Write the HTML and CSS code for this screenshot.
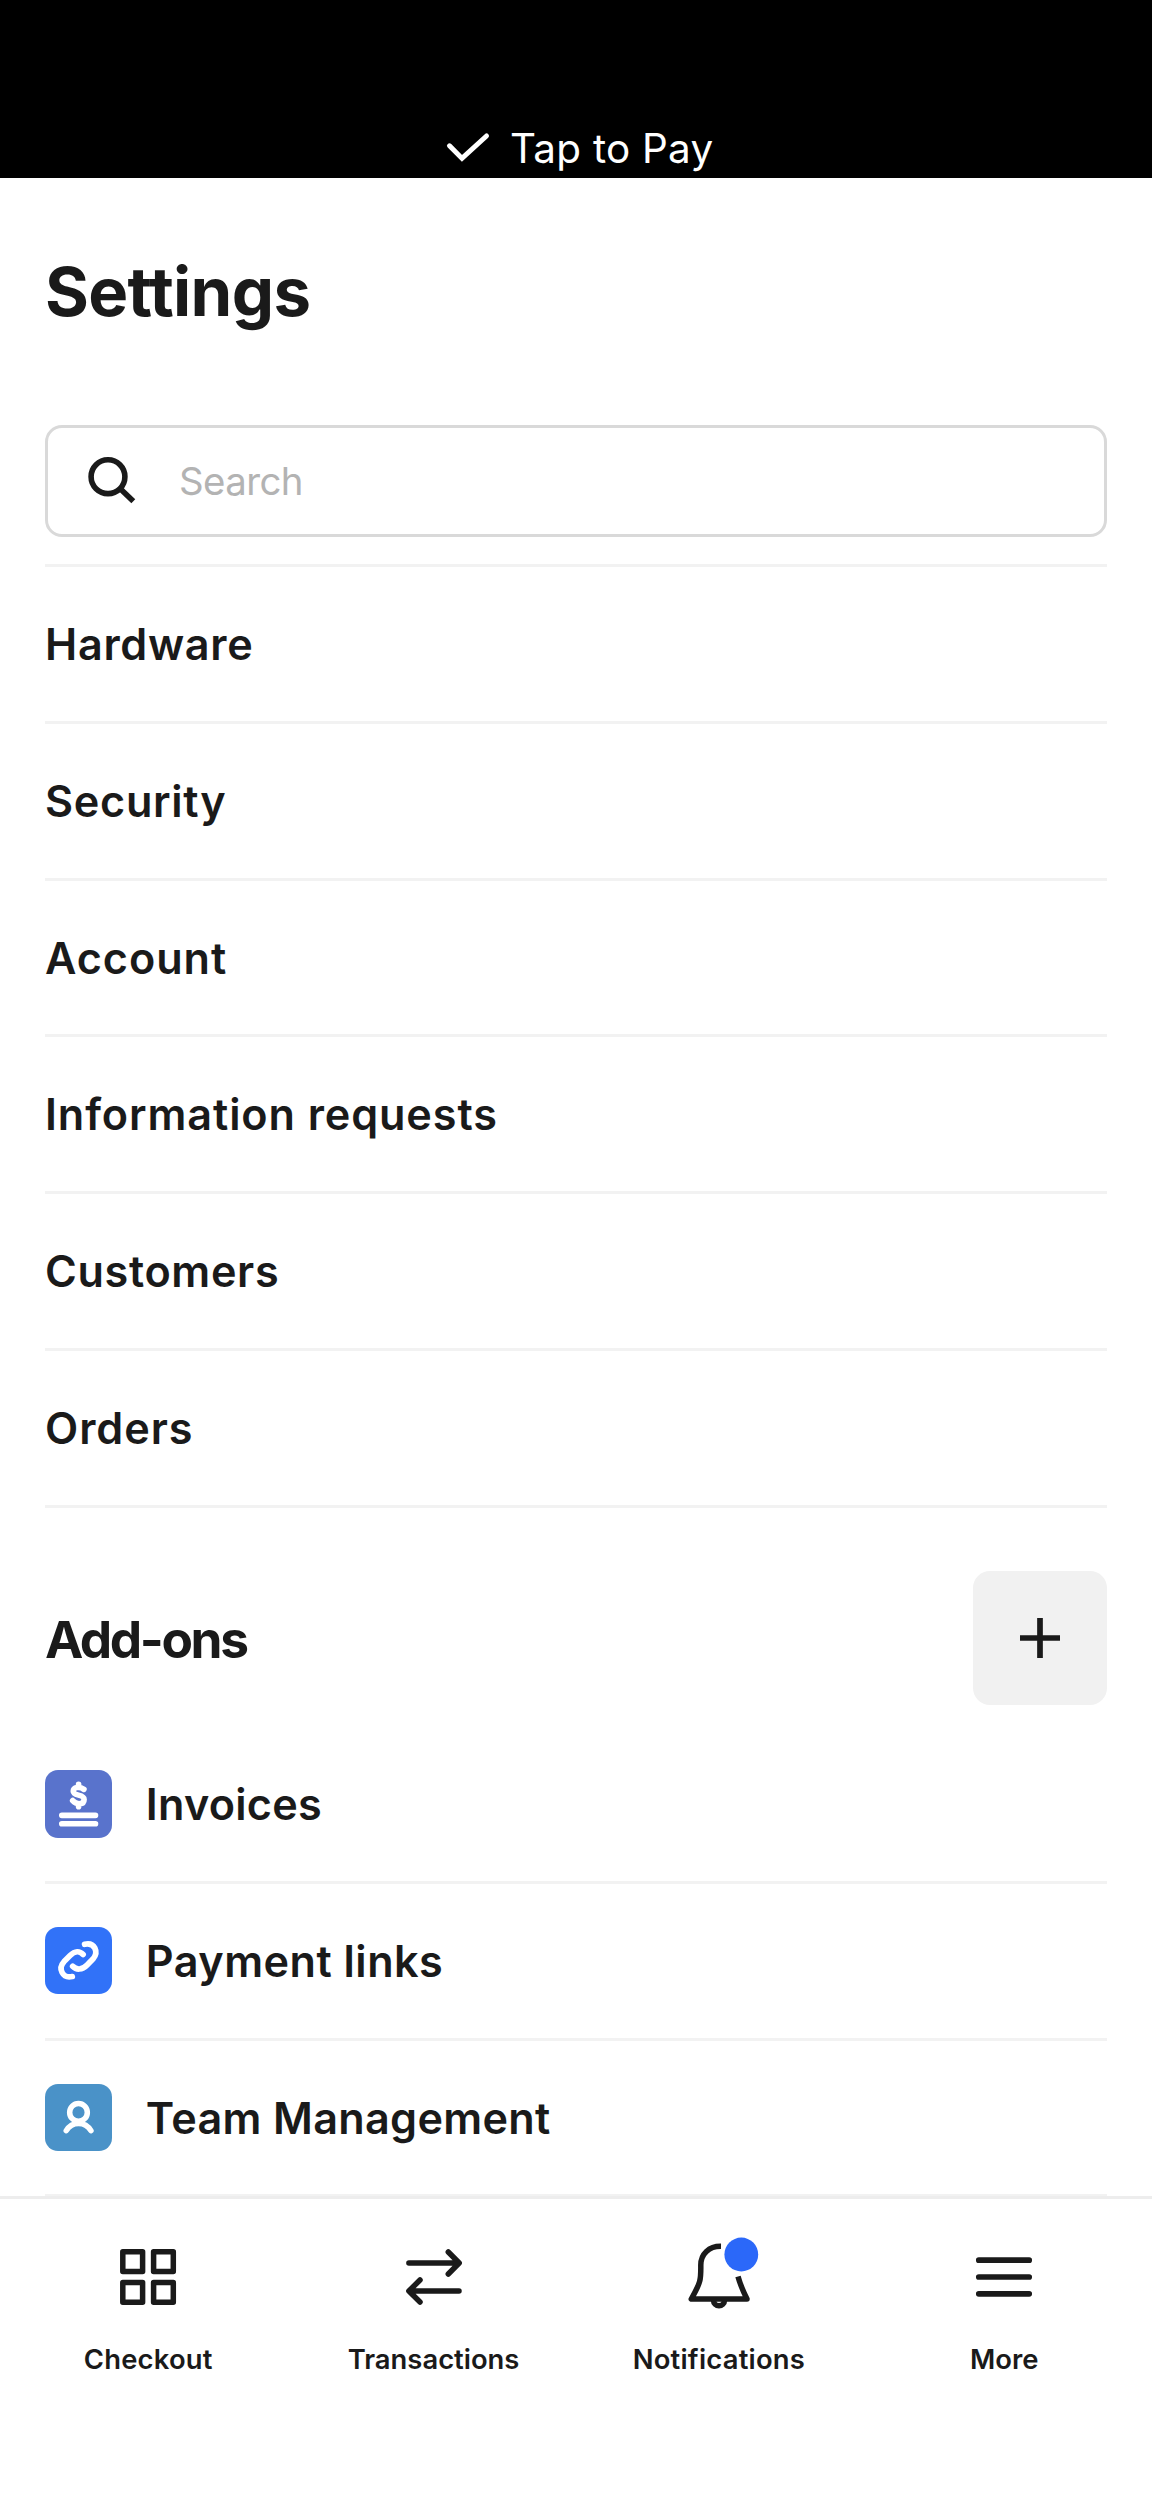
FILE: index.html
```html
<!DOCTYPE html>
<html lang="en">
<head>
<meta charset="utf-8">
<title>Settings</title>
<link rel="stylesheet" href="styles.css">
</head>
<body>
<div class="screen">
  <header class="status">
    <svg class="status-check" viewBox="0 0 46 32" fill="none" stroke="#fff" stroke-width="5" stroke-linecap="round"><path d="M4.5 14.8 17 27.4 41.5 5"/></svg>
    <span class="status-text">Tap to Pay</span>
  </header>
  <main class="content">
    <h1 class="title">Settings</h1>
    <div class="search">
      <svg class="search-icon" viewBox="0 0 50 50" fill="none" stroke="#1a1a1a" stroke-width="5.6"><circle cx="22" cy="20.7" r="16.9"/><path d="M34 32.5 47.3 45.3"/></svg>
      <span class="search-text">Search</span>
    </div>
    <ul class="list">
      <li class="row"><span class="t-hardware">Hardware</span></li>
      <li class="row"><span class="t-security">Security</span></li>
      <li class="row"><span class="t-account">Account</span></li>
      <li class="row"><span class="t-info">Information requests</span></li>
      <li class="row"><span class="t-customers">Customers</span></li>
      <li class="row"><span class="t-orders">Orders</span></li>
    </ul>
    <div class="section-head">
      <h2 class="section-title">Add-ons</h2>
      <button class="add" aria-label="Add">
        <svg class="add-icon" viewBox="0 0 40 40" stroke="#1a1a1a" stroke-width="5.7"><path d="M20 0V40M0 20H40"/></svg>
      </button>
    </div>
    <ul class="addons">
      <li class="row">
        <svg class="tile tile-invoice" viewBox="0 0 67 67" fill="none" stroke="#fff" stroke-linecap="round" stroke-linejoin="round">
          <path stroke-width="5.7" d="M16.8 45.2H50.3M16.8 53.6H50.3"/>
          <path stroke-width="5.6" d="M38.8 19.3C34.5 16.2 28.2 17 28.2 21.3 28.2 26.5 39 23.6 39 29.3 39 34.7 31.5 34.9 27.6 30.5M33.5 14.3V16.5M33.5 34V36.6"/>
        </svg>
        <span class="t-invoices">Invoices</span>
      </li>
      <li class="row">
        <svg class="tile tile-link" viewBox="0 0 67 67" fill="none" stroke="#fff" stroke-width="5.7" stroke-linecap="round" stroke-linejoin="round">
          <path d="M39.5 17.2C49.5 14.9 54 25 47.8 32L42 38C37 43.2 31 42.8 27.6 39.2"/>
          <path d="M27.2 49.4C17.5 51.5 12.6 41.5 19 34.5L25 28.5C30 23.5 34.5 23.7 38 27.4"/>
        </svg>
        <span class="t-payment">Payment links</span>
      </li>
      <li class="row">
        <svg class="tile tile-team" viewBox="0 0 67 67" fill="none" stroke="#fff" stroke-width="5.5" stroke-linecap="round">
          <circle cx="33.4" cy="28.3" r="8.8"/>
          <path d="M21.2 46.5C27 37 40 37 45.8 46.5"/>
        </svg>
        <span class="t-team">Team Management</span>
      </li>
    </ul>
  </main>
  <nav class="tabs">
    <a class="tab">
      <svg class="tab-icon" viewBox="0 0 80 80" fill="none" stroke="#1a1a1a" stroke-width="5.5" stroke-linejoin="round"><path d="M14.8 14.8H34.6V34.6H14.8ZM45.6 14.8H65.3V34.6H45.6ZM14.8 45.6H34.6V65.3H14.8ZM45.6 45.6H65.3V65.3H45.6Z"/></svg>
      <span class="tab-label t-checkout">Checkout</span>
    </a>
    <a class="tab">
      <svg class="tab-icon" viewBox="0 0 80 80" fill="none" stroke="#1a1a1a" stroke-width="5.5" stroke-linecap="round" stroke-linejoin="round"><path d="M14.9 26H65M54.3 15 65.2 26 54.3 37M65 54H15M26 43 14.9 54 26 65"/></svg>
      <span class="tab-label t-transactions">Transactions</span>
    </a>
    <a class="tab">
      <svg class="tab-icon" viewBox="0 0 80 80" fill="none" stroke="#1a1a1a" stroke-width="5.5" stroke-linejoin="round"><path d="M42 9.2C30 9 21.8 17 21.8 28 21.8 42 22.5 44 12.3 62H68C63 52 61.2 47.5 59 39.5"/><path d="M34.6 62.5V64C34.6 66.5 37 68.8 40 68.8S45.4 66.5 45.4 64V62.5"/><circle cx="62.3" cy="17.5" r="16.9" fill="#2b68f9" stroke="none"/></svg>
      <span class="tab-label t-notifications">Notifications</span>
    </a>
    <a class="tab">
      <svg class="tab-icon" viewBox="0 0 80 80" fill="none" stroke="#1a1a1a" stroke-width="5.7" stroke-linecap="round"><path d="M14.8 23.2H65.2M14.8 40H65.2M14.8 56.8H65.2"/></svg>
      <span class="tab-label t-more">More</span>
    </a>
  </nav>
</div>
</body>
</html>
```
FILE: styles.css
```css
* { box-sizing: border-box; margin: 0; padding: 0; }
body { background: #fff; color: #1a1a1a; font-family: Inter, "Liberation Sans", sans-serif; }
.screen { width: 1152px; height: 2496px; display: flex; flex-direction: column; overflow: hidden; background: #fff; }

.status { height: 178.4px; flex: none; padding-top: 119px; padding-left: 445px; background: #000; color: #fff; display: flex; align-items: flex-start; gap: 19px; }
.status-check { width: 46px; height: 32px; margin-top: 12px; flex: none; }
.status-text { font-size: 40.4px; line-height: 60px; letter-spacing: 0.25px; white-space: nowrap; }

.content { height: 2017.6px; flex: none; padding: 0 45px; overflow: hidden; }
.title { padding-top: 74px; height: 246.6px; font-size: 67.1px; line-height: 80px; font-weight: 700; letter-spacing: -0.65px; }
.search { height: 112px; border: 3px solid #d9d9d9; border-radius: 17px; display: flex; align-items: center; padding-left: 38px; gap: 43px; }
.search-icon { width: 50px; height: 50px; flex: none; }
.search-text { font-size: 38.4px; font-weight: 400; letter-spacing: -0.59px; color: #b3b3b3; }

.list { list-style: none; margin-top: 27.25px; border-top: 3px solid #f2f2f2; }
.addons { list-style: none; margin-top: 22px; }
.row { height: 156.75px; border-bottom: 3px solid #f2f2f2; display: flex; align-items: center; gap: 33.6px; font-size: 43.2px; font-weight: 600; white-space: nowrap; }

.section-head { height: 134.4px; margin-top: 63px; display: flex; align-items: center; justify-content: space-between; }
.section-title { padding-top: 2px; font-size: 51.4px; font-weight: 700; letter-spacing: -2.4px; }
.add { width: 134.4px; height: 134.4px; border: 0; border-radius: 17px; background: #f1f1f1; display: flex; align-items: center; justify-content: center; }
.add-icon { width: 40px; height: 40px; }

.tile { width: 67.2px; height: 67.2px; border-radius: 13px; flex: none; }
.tile-invoice { background: #5973cc; }
.tile-link { background: #3172f8; }
.tile-team { background: #4a92c8; }

.tabs { height: 300px; flex: none; border-top: 3px solid #ededed; padding: 38.5px 5.2px 0 5.6px; display: flex; }
.tab { flex: 1; display: flex; flex-direction: column; align-items: center; }
.tab-icon { width: 80px; height: 80px; }
.tab-label { margin-top: 23.5px; font-size: 27.4px; line-height: 36px; font-weight: 600; }

.t-hardware { letter-spacing: 0.7px; }
.t-security { letter-spacing: 0.7px; }
.t-account { letter-spacing: 0.95px; }
.t-info { letter-spacing: 0.9px; }
.t-customers { letter-spacing: 0.65px; }
.t-orders { letter-spacing: 0.95px; }
.t-invoices { letter-spacing: 0.25px; }
.t-payment { letter-spacing: 0.48px; }
.t-team { letter-spacing: 0.31px; }
.t-checkout { letter-spacing: 0.22px; }
.t-notifications { letter-spacing: 0.21px; }
```
